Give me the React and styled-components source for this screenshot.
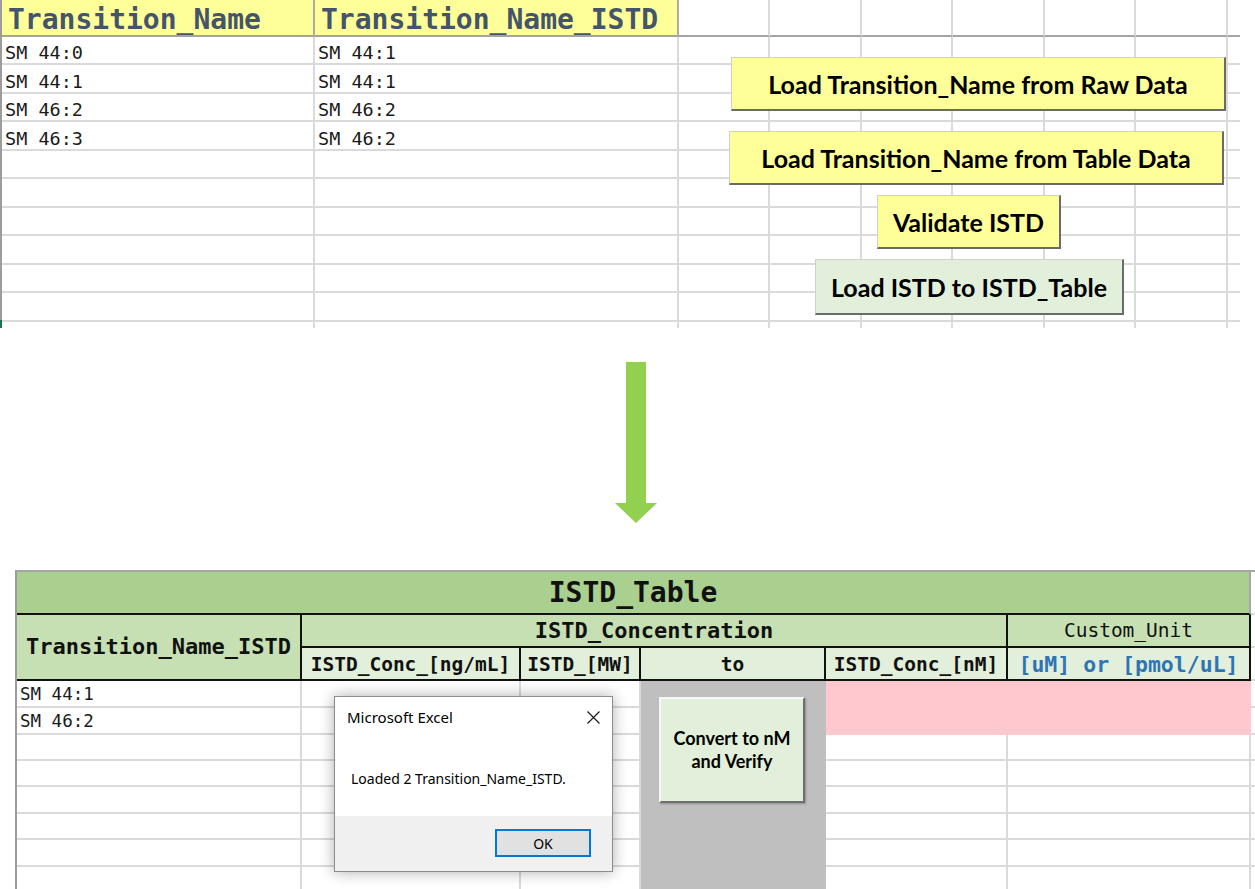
import React from 'react';
import styled, { createGlobalStyle } from 'styled-components';

const MONO = '"DejaVu Sans Mono", "Liberation Mono", monospace';

const GlobalStyle = createGlobalStyle`
  html, body { margin: 0; padding: 0; background: #ffffff; }
  body { font-family: ${MONO}; }
  *, *::before, *::after { box-sizing: border-box; }
`;

const Page = styled.div`
  width: 1255px;
  height: 889px;
  overflow: hidden;
  display: flex;
  flex-direction: column;
  background: #ffffff;
`;

/* ---------- top sheet ---------- */
const TopArea = styled.div`
  position: relative;
  flex: none;
  width: 1240px;
  height: 328px;
`;

const TopGrid = styled.div`
  position: relative;
  display: grid;
  grid-template-columns: 313px 364px 91px 92px 91px 92px 91px 92px 12px;
  grid-template-rows: 37px repeat(5, 28px 29px) 6px;
  height: 328px;
  border-left: 2px solid #9c9c9c;
  &::after {
    content: '';
    position: absolute;
    left: -2px;
    bottom: 0;
    width: 2px;
    height: 8px;
    background: #217346;
  }
`;

const SheetCell = styled.div`
  display: flex;
  align-items: flex-end;
  overflow: hidden;
  white-space: nowrap;
  line-height: 1;
  font-family: ${MONO};
  border-right: ${(p) => (p.$lastCol ? 'none' : `2px solid ${p.$strong ? '#ababab' : '#dadada'}`)};
  border-bottom: ${(p) => (p.$lastRow ? 'none' : '2px solid #dadada')};
`;

const TopHeaderCell = styled(SheetCell)`
  background: ${(p) => (p.$filled ? '#ffff99' : '#ffffff')};
  border-bottom: 2px solid #a3a3a3;
  padding: 0 0 1px 6px;
  font-size: 28px;
  font-weight: 700;
  color: #44546a;
`;

const TopDataCell = styled(SheetCell)`
  padding: 0 0 1px 3px;
  font-size: 18.5px;
  color: #1a1a1a;
`;

const ButtonStack = styled.div`
  position: absolute;
  left: 0;
  top: 57px;
  display: flex;
  flex-direction: column;
  align-items: flex-start;
`;

const MacroButton = styled.div`
  width: ${(p) => p.$w}px;
  height: ${(p) => p.$h}px;
  margin-left: ${(p) => p.$x}px;
  margin-top: ${(p) => p.$gap}px;
  background: ${(p) => p.$fill};
  border-top: 1px solid #cfcfcf;
  border-left: 1px solid #cfcfcf;
  border-right: 2px solid #6a6a6a;
  border-bottom: 2px solid #6a6a6a;
  display: flex;
  align-items: center;
  justify-content: center;
  font-family: Lato, "Open Sans", sans-serif;
  font-weight: 700;
  font-size: 25px;
  color: #000000;
  white-space: nowrap;
`;

/* ---------- arrow ---------- */
const ArrowArea = styled.div`
  flex: none;
  height: 242px;
  padding: 34px 0 0 615px;
`;

/* ---------- bottom sheet ---------- */
const BottomArea = styled.div`
  position: relative;
  flex: none;
  margin-left: 15px;
`;

const BottomGrid = styled.div`
  display: grid;
  grid-template-columns: 285px 219px 120px 185px 182px 243px 4px;
  grid-template-rows: 43px 33px 33px 27px 27px 26px 26px 27px 26px 27px 26px;
  border-left: 2px solid #9c9c9c;
  border-top: 2px solid #a6a6a6;
  font-family: ${MONO};
`;

const HeadCell = styled.div`
  display: flex;
  align-items: center;
  justify-content: center;
  white-space: nowrap;
  overflow: hidden;
  line-height: 1;
  color: #111111;
  grid-column: span ${(p) => p.$span || 1};
  grid-row: span ${(p) => p.$rows || 1};
  border-right: 2px solid #111111;
  border-bottom: 2px solid #111111;
`;

const TitleCell = styled(HeadCell)`
  background: #a9d08e;
  border-right-color: #a6a6a6;
  font-size: 28px;
  font-weight: 700;
`;

const GroupCell = styled(HeadCell)`
  background: #c6e0b4;
  font-size: ${(p) => (p.$plain ? '19.5px' : '22px')};
  font-weight: ${(p) => (p.$plain ? 400 : 700)};
`;

const SubCell = styled(HeadCell)`
  background: #e2efda;
  padding-top: 2px;
  font-size: ${(p) => (p.$accent ? '21.5px' : '19.5px')};
  font-weight: 700;
  color: ${(p) => (p.$accent ? '#2f75b5' : '#111111')};
`;

const StripCell = styled.div`
  background: #ffffff;
  border-bottom: 2px solid #dadada;
`;

const DataCell = styled.div`
  display: flex;
  align-items: flex-end;
  padding: 0 0 3px 3px;
  line-height: 1;
  font-size: 17.5px;
  color: #1a1a1a;
  white-space: nowrap;
  overflow: hidden;
  background: ${(p) => p.$fill};
  border-right: ${(p) => (p.$noRight ? 'none' : `2px solid ${p.$line}`)};
  border-bottom: 2px solid ${(p) => p.$line};
`;

const ShapeButton = styled.div`
  position: absolute;
  left: 644px;
  top: 127px;
  width: 146px;
  height: 106px;
  background: #e2efda;
  border-top: 2px solid #f7f7f7;
  border-left: 2px solid #f7f7f7;
  border-right: 2px solid #6e6e6e;
  border-bottom: 2px solid #6e6e6e;
  box-shadow: 1px 1px 2px rgba(0, 0, 0, 0.25);
  display: flex;
  align-items: center;
  justify-content: center;
  text-align: center;
  font-family: Lato, "Open Sans", sans-serif;
  font-weight: 700;
  font-size: 18px;
  line-height: 23px;
  color: #000000;
`;

const Dialog = styled.div`
  position: absolute;
  left: 319px;
  top: 126px;
  width: 279px;
  height: 176px;
  display: flex;
  flex-direction: column;
  background: #ffffff;
  border: 1px solid #8c8c8c;
  box-shadow: 0 0 14px rgba(0, 0, 0, 0.32);
  font-family: "Noto Sans", "Open Sans", sans-serif;
  color: #000000;
`;

const DialogTitleBar = styled.div`
  height: 40px;
  flex: none;
  display: flex;
  align-items: center;
  justify-content: space-between;
  padding: 0 12px;
  font-size: 15px;
`;

const DialogBody = styled.div`
  flex: 1;
  display: flex;
  align-items: center;
  padding: 3px 0 0 16px;
  font-size: 14px;
`;

const DialogFooter = styled.div`
  height: 55px;
  flex: none;
  display: flex;
  justify-content: flex-end;
  align-items: flex-start;
  padding: 13px 21px 0 0;
  background: #f0f0f0;
`;

const OkButton = styled.div`
  width: 96px;
  height: 28px;
  display: flex;
  align-items: center;
  justify-content: center;
  background: #e1e1e1;
  border: 2px solid #0078d7;
  font-size: 14px;
`;

const topRows = [
  ['SM 44:0', 'SM 44:1'],
  ['SM 44:1', 'SM 44:1'],
  ['SM 46:2', 'SM 46:2'],
  ['SM 46:3', 'SM 46:2'],
];

const bottomRows = [['SM 44:1'], ['SM 46:2']];

function TopSheet() {
  const cells = [];
  for (let c = 0; c < 9; c += 1) {
    cells.push(
      <TopHeaderCell key={`h${c}`} $filled={c < 2} $strong={c < 2} $lastCol={c === 8}>
        {c === 0 ? 'Transition_Name' : c === 1 ? 'Transition_Name_ISTD' : ''}
      </TopHeaderCell>
    );
  }
  for (let r = 0; r < 11; r += 1) {
    for (let c = 0; c < 9; c += 1) {
      const text = topRows[r] && c < 2 ? topRows[r][c] : '';
      cells.push(
        <TopDataCell key={`${r}-${c}`} $lastCol={c === 8} $lastRow={r === 10}>
          {text}
        </TopDataCell>
      );
    }
  }
  return (
    <TopArea>
      <TopGrid>{cells}</TopGrid>
      <ButtonStack>
        <MacroButton $x={731} $gap={0} $w={495} $h={54} $fill="#ffff99">
          Load Transition_Name from Raw Data
        </MacroButton>
        <MacroButton $x={729} $gap={20} $w={495} $h={54} $fill="#ffff99">
          Load Transition_Name from Table Data
        </MacroButton>
        <MacroButton $x={877} $gap={10} $w={184} $h={54} $fill="#ffff99">
          Validate ISTD
        </MacroButton>
        <MacroButton $x={815} $gap={10} $w={309} $h={56} $fill="#e2efda">
          Load ISTD to ISTD_Table
        </MacroButton>
      </ButtonStack>
    </TopArea>
  );
}

function DownArrow() {
  return (
    <ArrowArea>
      <svg width="42" height="161" viewBox="0 0 42 161">
        <polygon points="11,0 31,0 31,141 42,141 21,161 0,141 11,141" fill="#92d050" />
      </svg>
    </ArrowArea>
  );
}

function cellStyle(r, c) {
  if (c === 3) return { fill: '#bfbfbf', line: '#bfbfbf' };
  if ((c === 4 || c === 5) && r < 2) return { fill: '#ffc7ce', line: '#ffc7ce' };
  return { fill: '#ffffff', line: '#dadada' };
}

function BottomSheet() {
  const data = [];
  for (let r = 0; r < 8; r += 1) {
    for (let c = 0; c < 7; c += 1) {
      const s = cellStyle(r, c);
      data.push(
        <DataCell key={`${r}-${c}`} $fill={s.fill} $line={s.line} $noRight={c === 6}>
          {c === 0 && bottomRows[r] ? bottomRows[r][0] : ''}
        </DataCell>
      );
    }
  }
  return (
    <BottomArea>
      <BottomGrid>
        <TitleCell $span={6}>ISTD_Table</TitleCell>
        <StripCell />
        <GroupCell $rows={2}>Transition_Name_ISTD</GroupCell>
        <GroupCell $span={4}>ISTD_Concentration</GroupCell>
        <GroupCell $plain>Custom_Unit</GroupCell>
        <StripCell />
        <SubCell>ISTD_Conc_[ng/mL]</SubCell>
        <SubCell>ISTD_[MW]</SubCell>
        <SubCell>to</SubCell>
        <SubCell>ISTD_Conc_[nM]</SubCell>
        <SubCell $accent>[uM] or [pmol/uL]</SubCell>
        <StripCell />
        {data}
      </BottomGrid>
      <ShapeButton>
        Convert to nM
        <br />
        and Verify
      </ShapeButton>
      <Dialog>
        <DialogTitleBar>
          <span>Microsoft Excel</span>
          <svg width="13" height="13" viewBox="0 0 13 13">
            <path d="M0.5 0.5 L12.5 12.5 M12.5 0.5 L0.5 12.5" stroke="#1a1a1a" strokeWidth="1.2" fill="none" />
          </svg>
        </DialogTitleBar>
        <DialogBody>Loaded 2 Transition_Name_ISTD.</DialogBody>
        <DialogFooter>
          <OkButton>OK</OkButton>
        </DialogFooter>
      </Dialog>
    </BottomArea>
  );
}

export default function App() {
  return (
    <>
      <GlobalStyle />
      <Page>
        <TopSheet />
        <DownArrow />
        <BottomSheet />
      </Page>
    </>
  );
}
